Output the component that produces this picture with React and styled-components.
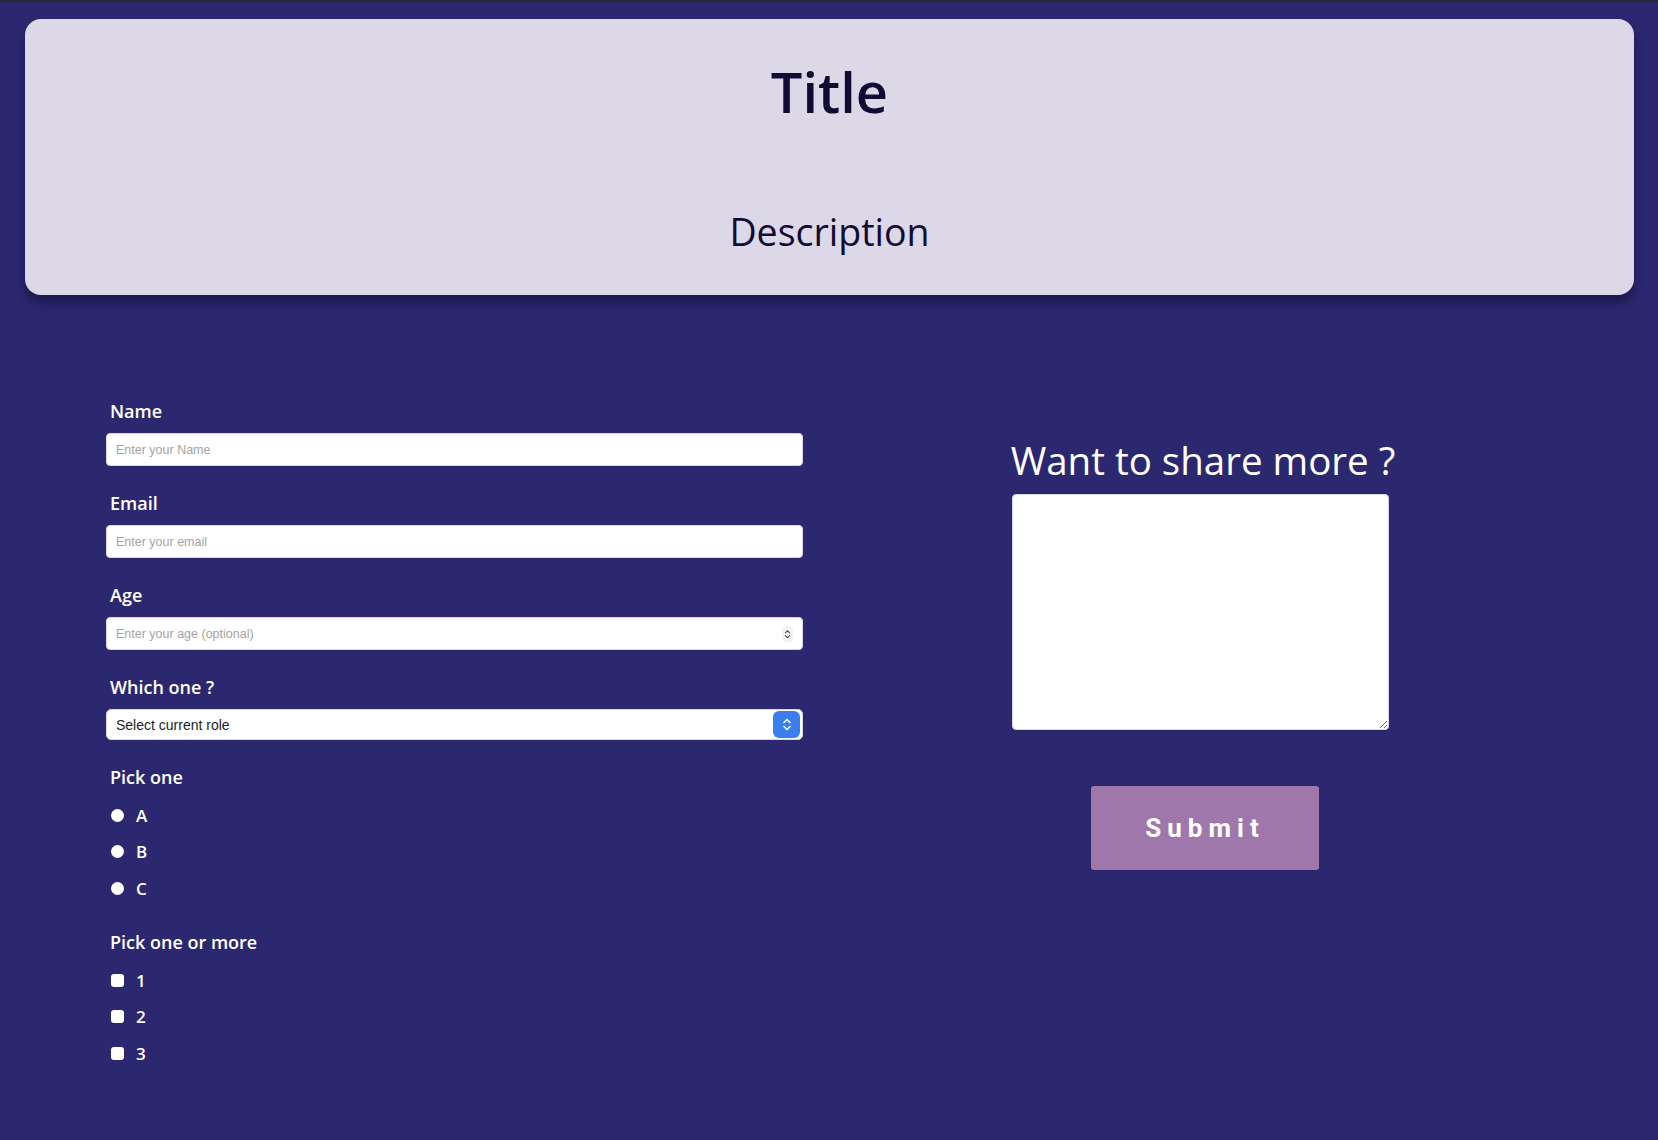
import React from "react";
import styled, { createGlobalStyle } from "styled-components";

const GlobalStyle = createGlobalStyle`
  html, body {
    margin: 0;
    padding: 0;
    background: #2c2870;
  }
  body {
    font-family: "Open Sans", "Noto Sans", sans-serif;
  }
  * {
    box-sizing: border-box;
  }
`;

const Page = styled.div`
  min-height: 1140px;
  background: #2c2870;
  border-top: 2px solid #272a3b;
  padding: 17px 24px 40px 25px;
`;

const HeaderCard = styled.header`
  background: #dcd8e7;
  border-radius: 16px;
  box-shadow: 0 8px 10px rgba(10, 8, 40, 0.45);
  height: 276px;
  padding-top: 38px;
  display: flex;
  flex-direction: column;
  align-items: center;
  color: #110b33;
`;

const Title = styled.h1`
  margin: 0;
  font-size: 56px;
  line-height: 68px;
  font-weight: 600;
`;

const Description = styled.p`
  margin: 84px 0 0;
  font-size: 37.5px;
  line-height: 46px;
  font-weight: 400;
`;

const FormRow = styled.form`
  display: flex;
  align-items: flex-start;
  margin-top: 104px;
  padding-left: 81px;
  gap: 200px;
`;

const LeftColumn = styled.div`
  width: 697px;
  display: flex;
  flex-direction: column;
`;

const RightColumn = styled.div`
  width: 400px;
  margin-top: 38px;
  display: flex;
  flex-direction: column;
  align-items: center;
`;

const Field = styled.div`
  display: flex;
  flex-direction: column;
  margin-bottom: 25px;
`;

const Label = styled.label`
  color: #ffffff;
  font-size: 18px;
  line-height: 24px;
  font-weight: 600;
  padding-left: 4px;
  margin-bottom: 10px;
`;

const TextInput = styled.input`
  width: 100%;
  height: 33px;
  border: 1px solid #d6d3e6;
  border-radius: 4px;
  background: #ffffff;
  padding: 0 9px;
  font-family: "Liberation Sans", Arial, sans-serif;
  font-size: 12.5px;
  color: #222;
  outline: none;

  &::placeholder {
    color: #a3a3a3;
  }
`;

const InputWrap = styled.div`
  position: relative;
`;

const Stepper = styled.span`
  position: absolute;
  right: 10px;
  top: 9px;
  width: 11px;
  height: 16px;
  border-radius: 4px;
  background: #f3f3f3;
  display: flex;
  align-items: center;
  justify-content: center;
`;

const Select = styled.select`
  width: 100%;
  height: 31px;
  border: 1px solid #d6d3e6;
  border-radius: 5px;
  background: #ffffff;
  padding: 0 9px;
  font-family: "Liberation Sans", Arial, sans-serif;
  font-size: 14px;
  color: #1d1d1d;
  appearance: none;
  outline: none;
`;

const SelectBadge = styled.span`
  position: absolute;
  right: 3px;
  top: 2px;
  width: 27px;
  height: 27px;
  border-radius: 6px;
  background: #3a7ff0;
  display: flex;
  align-items: center;
  justify-content: center;
`;

const Group = styled.div`
  display: flex;
  flex-direction: column;
  gap: 12.5px;
  margin-bottom: 30px;
`;

const GroupLabel = styled.div`
  color: #ffffff;
  font-size: 18px;
  line-height: 24px;
  font-weight: 600;
  padding-left: 4px;
  margin-bottom: 1.5px;
`;

const Option = styled.label`
  display: flex;
  align-items: center;
  gap: 12px;
  height: 24px;
  padding-left: 5px;
  color: #ffffff;
  font-size: 17px;
  font-weight: 600;
`;

const Choice = styled.input`
  appearance: none;
  margin: 0;
  width: 13px;
  height: 13px;
  background: #ffffff;
  border-radius: ${(p) => (p.type === "radio" ? "50%" : "3px")};
`;

const ShareTitle = styled.h2`
  margin: 0 0 11px;
  color: #ffffff;
  font-size: 38.5px;
  line-height: 46px;
  font-weight: 500;
  white-space: nowrap;
`;

const TextArea = styled.textarea`
  width: 377px;
  height: 236px;
  margin-right: 6px;
  border: 1px solid #d6d3e6;
  border-radius: 4px;
  background: #ffffff;
  outline: none;
`;

const SubmitButton = styled.button`
  margin-top: 56px;
  margin-left: 4px;
  width: 228px;
  height: 84px;
  border: 0;
  border-radius: 3px;
  background: #a077ab;
  color: #ffffff;
  font-family: Roboto, "Liberation Sans", sans-serif;
  font-weight: 700;
  font-size: 26px;
  letter-spacing: 6px;
  padding-left: 6px;
`;

const Chevrons = ({ color, size }) => (
  <svg width={size} height={size * 1.5} viewBox="0 0 10 15" fill="none">
    <path
      d="M2 5.5 L5 2.5 L8 5.5 M2 9.5 L5 12.5 L8 9.5"
      stroke={color}
      strokeWidth="1.6"
      strokeLinecap="round"
      strokeLinejoin="round"
    />
  </svg>
);

const App = () => {
  return (
    <>
      <GlobalStyle />
      <Page>
        <HeaderCard>
          <Title>Title</Title>
          <Description>Description</Description>
        </HeaderCard>
        <FormRow onSubmit={(e) => e.preventDefault()}>
          <LeftColumn>
            <Field>
              <Label htmlFor="name">Name</Label>
              <TextInput id="name" type="text" placeholder="Enter your Name" />
            </Field>
            <Field>
              <Label htmlFor="email">Email</Label>
              <TextInput id="email" type="email" placeholder="Enter your email" />
            </Field>
            <Field>
              <Label htmlFor="age">Age</Label>
              <InputWrap>
                <TextInput id="age" type="text" placeholder="Enter your age (optional)" />
                <Stepper>
                  <Chevrons color="#555" size={7} />
                </Stepper>
              </InputWrap>
            </Field>
            <Field>
              <Label htmlFor="role">Which one ?</Label>
              <InputWrap>
                <Select id="role" defaultValue="">
                  <option value="">Select current role</option>
                  <option value="student">Student</option>
                  <option value="pro">Professional</option>
                </Select>
                <SelectBadge>
                  <Chevrons color="#ffffff" size={10} />
                </SelectBadge>
              </InputWrap>
            </Field>
            <Group>
              <GroupLabel>Pick one</GroupLabel>
              {["A", "B", "C"].map((v) => (
                <Option key={v}>
                  <Choice type="radio" name="pick" value={v} />
                  {v}
                </Option>
              ))}
            </Group>
            <Group>
              <GroupLabel>Pick one or more</GroupLabel>
              {["1", "2", "3"].map((v) => (
                <Option key={v}>
                  <Choice type="checkbox" name="more" value={v} />
                  {v}
                </Option>
              ))}
            </Group>
          </LeftColumn>
          <RightColumn>
            <ShareTitle>Want to share more ?</ShareTitle>
            <TextArea />
            <SubmitButton type="submit">Submit</SubmitButton>
          </RightColumn>
        </FormRow>
      </Page>
    </>
  );
};

export default App;
